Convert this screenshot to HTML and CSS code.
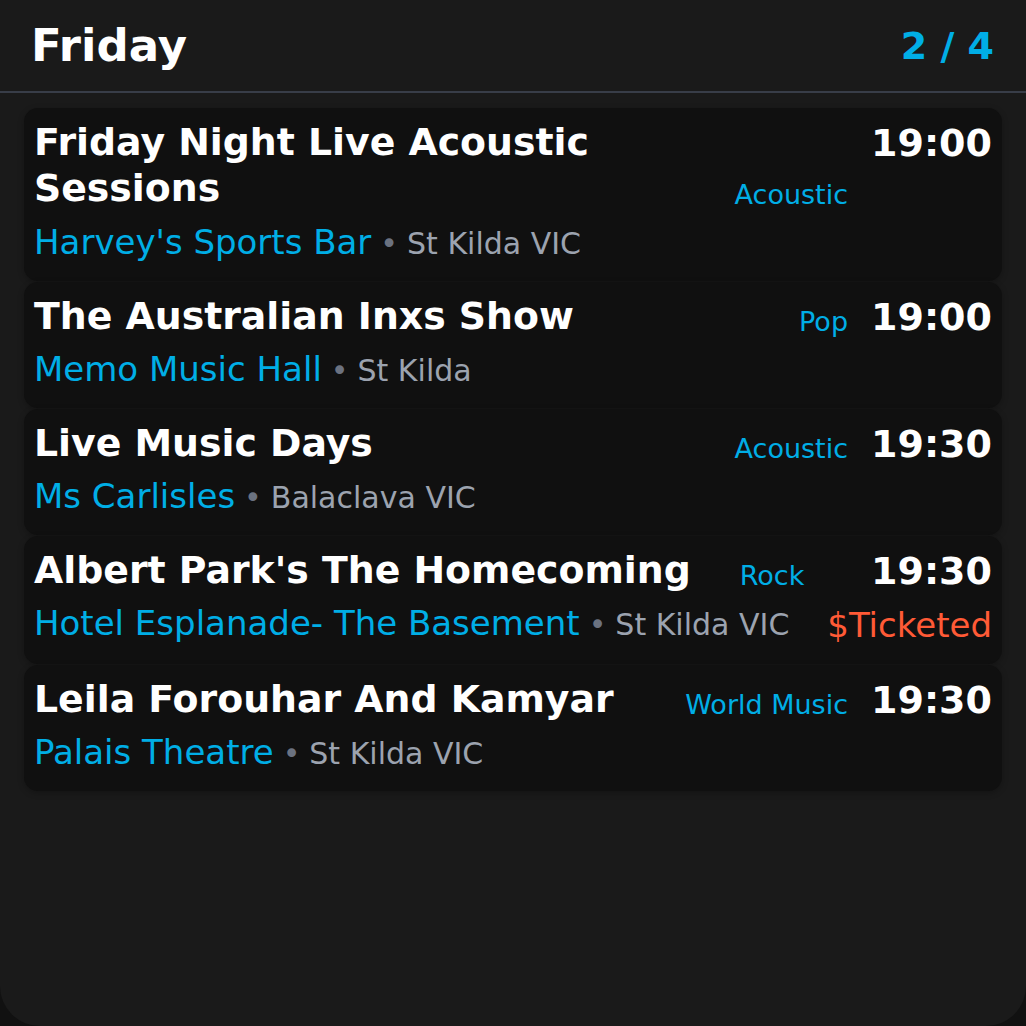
FILE: index.html
```html
<!DOCTYPE html>
<html>
<head>
<meta charset="utf-8">
<link rel="stylesheet" href="styles.css">
</head>
<body>
<div class="screen">
  <header class="header">
    <div class="day">Friday</div>
    <div class="pager">2 / 4</div>
  </header>
  <div class="list">
    <div class="card">
      <div class="main">
        <div class="top">
          <div class="title">Friday Night Live Acoustic Sessions</div>
          <div class="genre">Acoustic</div>
        </div>
        <div class="venue-line"><span class="venue">Harvey's Sports Bar</span><span class="dot">•</span><span class="place">St Kilda VIC</span></div>
      </div>
      <div class="side">
        <div class="time">19:00</div>
      </div>
    </div>
    <div class="card">
      <div class="main">
        <div class="top">
          <div class="title">The Australian Inxs Show</div>
          <div class="genre">Pop</div>
        </div>
        <div class="venue-line"><span class="venue">Memo Music Hall</span><span class="dot">•</span><span class="place">St Kilda</span></div>
      </div>
      <div class="side">
        <div class="time">19:00</div>
      </div>
    </div>
    <div class="card">
      <div class="main">
        <div class="top">
          <div class="title">Live Music Days</div>
          <div class="genre">Acoustic</div>
        </div>
        <div class="venue-line"><span class="venue">Ms Carlisles</span><span class="dot">•</span><span class="place">Balaclava VIC</span></div>
      </div>
      <div class="side">
        <div class="time">19:30</div>
      </div>
    </div>
    <div class="card">
      <div class="main">
        <div class="top">
          <div class="title">Albert Park's The Homecoming</div>
          <div class="genre">Rock</div>
        </div>
        <div class="venue-line"><span class="venue">Hotel Esplanade- The Basement</span><span class="dot">•</span><span class="place">St Kilda VIC</span></div>
      </div>
      <div class="side">
        <div class="time">19:30</div>
        <div class="price">$Ticketed</div>
      </div>
    </div>
    <div class="card">
      <div class="main">
        <div class="top">
          <div class="title">Leila Forouhar And Kamyar</div>
          <div class="genre">World Music</div>
        </div>
        <div class="venue-line"><span class="venue">Palais Theatre</span><span class="dot">•</span><span class="place">St Kilda VIC</span></div>
      </div>
      <div class="side">
        <div class="time">19:30</div>
      </div>
    </div>
  </div>
</div>
</body>
</html>
```

FILE: styles.css
```css
html, body {
  margin: 0;
  padding: 0;
  background: #111111;
}
body {
  font-family: "DejaVu Sans", sans-serif;
  color: #ffffff;
}
.screen {
  width: 1026px;
  height: 1026px;
  background: #1a1a1a;
  border-radius: 0 0 40px 40px;
  overflow: hidden;
}
.header {
  display: flex;
  justify-content: space-between;
  align-items: center;
  padding: 20px 32px 19px 31px;
  border-bottom: 2px solid #383d48;
}
.day {
  font-size: 45px;
  font-weight: bold;
  line-height: 1.164;
}
.pager {
  font-size: 38px;
  font-weight: bold;
  color: #00aee6;
}
.list {
  display: flex;
  flex-direction: column;
  gap: 1px;
  padding: 15px 24px;
}
.card {
  display: flex;
  gap: 23px;
  background: #101010;
  border-radius: 14px;
  padding: 11px 10px 17px 10px;
  box-shadow: 0 2px 6px rgba(0, 0, 0, 0.25);
}
.main {
  flex: 1;
  min-width: 0;
  display: flex;
  flex-direction: column;
  gap: 8px;
}
.top {
  display: flex;
  gap: 16px;
}
.title {
  flex: 1;
  font-size: 37.8px;
  font-weight: bold;
  line-height: 1.22;
}
.genre {
  align-self: flex-end;
  font-size: 27px;
  line-height: 1.3;
  color: #00aee6;
  white-space: nowrap;
}
.venue-line {
  font-size: 34px;
  line-height: 1.3;
  white-space: nowrap;
}
.venue {
  color: #00aee6;
}
.dot {
  color: #6b7280;
  font-size: 30px;
  margin: 0 9px;
}
.place {
  color: #9ca3af;
  font-size: 30px;
}
.side {
  display: flex;
  flex-direction: column;
  align-items: flex-end;
  gap: 6px;
}
.time {
  font-size: 38px;
  font-weight: bold;
  line-height: 1.3;
}
.price {
  font-size: 34px;
  line-height: 1.3;
  color: #ff5a36;
}
```
